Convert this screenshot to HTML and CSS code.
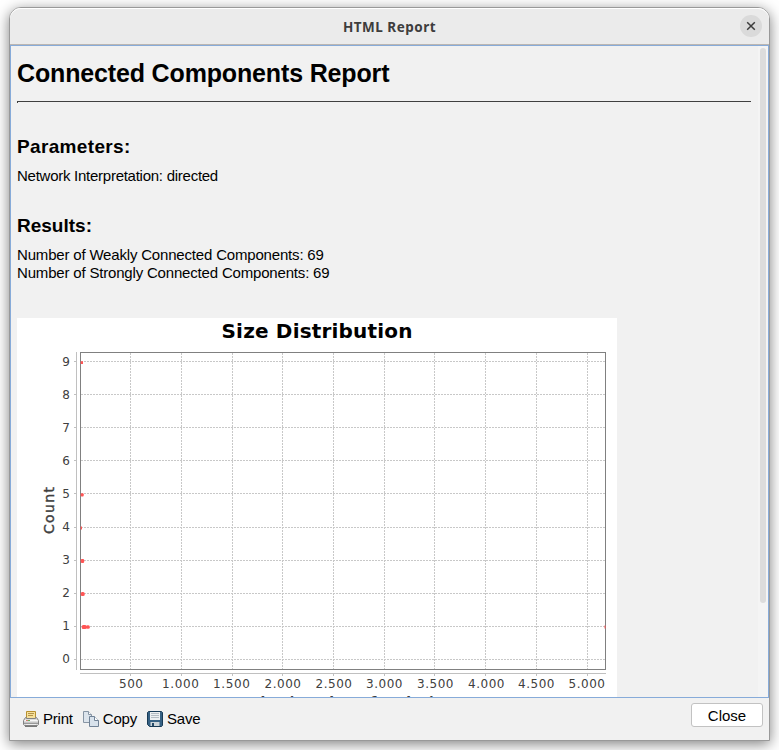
FILE: index.html
```
<!DOCTYPE html>
<html lang="en">
<head>
<meta charset="utf-8">
<title>HTML Report</title>
<link rel="stylesheet" href="styles.css">
</head>
<body>
<div class="window">
  <header class="titlebar">
    <h1 class="titlebar-text">HTML Report</h1>
    <button class="titlebar-close" aria-label="Close window">
      <svg width="10" height="10" viewBox="0 0 10 10"><path d="M1.2 1.2 8.8 8.8M8.800 1.200 1.200 8.800" fill="none" stroke="#3c3c3c" stroke-width="1.500"/></svg>
    </button>
  </header>
  <main class="viewport">
    <article class="report">
      <h1 class="report-title">Connected Components Report</h1>
      <hr class="rule">
      <h2 class="section parameters">Parameters:</h2>
      <p class="line interpretation">Network Interpretation: directed</p>
      <h2 class="section results">Results:</h2>
      <p class="line">Number of Weakly Connected Components: 69</p>
      <p class="line">Number of Strongly Connected Components: 69</p>
      <svg class="chart" width="600" height="400" viewBox="17 318 600 400">
        <rect x="17" y="318" width="600" height="400" fill="#fff"/>
        <text class="chart-title" x="221.500" y="338" textLength="191">Size Distribution</text>
        <g class="grid">
          <path d="M81 361.500H605M81 394.500H605M81 427.500H605M81 460.500H605M81 493.500H605M81 527.500H605M81 560.500H605M81 593.500H605M81 626.500H605M81 659.500H605"/>
          <path d="M130.500 353V669M181.500 353V669M232.500 353V669M282.500 353V669M333.500 353V669M384.500 353V669M434.500 353V669M485.500 353V669M536.500 353V669M587.500 353V669"/>
        </g>
        <path class="axis" d="M76.500 352V670M80 673.500H606M74 361.500h2M74 394.500h2M74 427.500h2M74 460.500h2M74 493.500h2M74 527.500h2M74 560.500h2M74 593.500h2M74 626.500h2M74 659.500h2M130.500 674v2M181.500 674v2M232.500 674v2M282.500 674v2M333.500 674v2M384.500 674v2M434.500 674v2M485.500 674v2M536.500 674v2M587.500 674v2"/>
        <rect class="frame" x="80.500" y="352.500" width="525" height="317"/>
        <g fill="#ff5555">
          <path d="M80.700 361.300h2.300v2.700h-2.300zM80.700 526.500h1.300v3h-1.300zM604.500 625.500h1v3h-1z"/>
          <rect x="80.700" y="493.200" width="3" height="3.300" rx="1"/>
          <rect x="80.700" y="559" width="3.500" height="4" rx="1.300"/>
          <rect x="80.700" y="592" width="4" height="4" rx="1.500"/>
          <rect x="81.700" y="625" width="5" height="4" rx="1.500"/>
          <rect x="86" y="625.300" width="3.800" height="3.400" rx="1.500"/>
        </g>
        <g class="tick" text-anchor="end">
          <text x="70" y="366">9</text><text x="70" y="399">8</text><text x="70" y="432">7</text><text x="70" y="465">6</text><text x="70" y="498">5</text><text x="70" y="531">4</text><text x="70" y="564">3</text><text x="70" y="597">2</text><text x="70" y="630">1</text><text x="70" y="663">0</text>
        </g>
        <g class="tick">
          <text x="119" y="688" textLength="24">500</text>
          <text x="162" y="688" textLength="37">1.000</text>
          <text x="213" y="688" textLength="37">1.500</text>
          <text x="264.500" y="688" textLength="36.500">2.000</text>
          <text x="315.500" y="688" textLength="36.500">2.500</text>
          <text x="366" y="688" textLength="36.500">3.000</text>
          <text x="417" y="688" textLength="36.500">3.500</text>
          <text x="468" y="688" textLength="36.500">4.000</text>
          <text x="518" y="688" textLength="36.500">4.500</text>
          <text x="568.500" y="688" textLength="36.500">5.000</text>
        </g>
        <text class="axis-label count" transform="translate(54 534) rotate(-90)" textLength="47">Count</text>
        <text class="axis-label" x="250.400" y="706.500" textLength="185">Size (number of nodes)</text>
      </svg>
    </article>
    <div class="scrollbar"><div class="thumb"></div></div>
  </main>
  <footer class="toolbar">
    <button class="tool print">
      <svg width="16" height="16" viewBox="0 0 16 16">
        <path d="M3.500 8V.500h9V8z" fill="#f6e09a" stroke="#b8902f"/>
        <path d="M5 2.500h6M5 4.500h5" stroke="#b3924a"/>
        <path d="M2.500 6.500h1v1h9v-1h1l2 3v4l-1 1h-13l-1-1v-4z" fill="#dcdcdc" stroke="#828282"/>
        <path d="M1.500 9.500h13" stroke="#f8f8f8"/>
        <path d="M1 11.500h14" stroke="#c4c4c4"/>
        <path d="M1 12.500h14" stroke="#999"/>
        <path d="M2 15.500h12" stroke="#777"/>
        <path d="M3 13.500h10" stroke="#eee"/>
        <path d="M3 9.500h2" stroke="#d77870"/><path d="M5 9.500h2" stroke="#68b45b"/>
      </svg>
      <span>Print</span>
    </button>
    <button class="tool copy">
      <svg width="16" height="16" viewBox="0 0 16 16">
        <path d="M.500.500h5l3 3v8h-8z" fill="#dce4ec" stroke="#8795a4"/>
        <path d="M5.500.500v3h3" fill="#fff" stroke="#8795a4"/>
        <path d="M6.500 5.500h5l4 4v6h-9z" fill="#d8e2ec" stroke="#718397"/>
        <path d="M11.500 5.500v4h4" fill="#fff" stroke="#718397"/>
      </svg>
      <span>Copy</span>
    </button>
    <button class="tool save">
      <svg width="16" height="16" viewBox="0 0 16 16">
        <path d="M1.500.500h13l1 1v13l-1 1h-12l-2-2v-12z" fill="#356083" stroke="#183a55"/>
        <path d="M3 1h10v8H3z" fill="#edf0f1"/>
        <path d="M4 2.500h8M4 4.500h8M4 6.500h8" stroke="#b5bdc3"/>
        <path d="M3.500 11h9v4h-9z" fill="#ccd5da"/>
        <path d="M5 12h2v3H5z" fill="#244966"/>
      </svg>
      <span>Save</span>
    </button>
    <button class="close-button">Close</button>
  </footer>
</div>
</body>
</html>
```
FILE: styles.css
```
* { box-sizing: border-box; }

body {
  margin: 0;
  height: 750px;
  padding: 7px 9px 9px;
  overflow: hidden;
  background: #fff;
  font-family: "Liberation Sans", sans-serif;
  color: #000;
}

button {
  border: 0;
  padding: 0;
  background: none;
  font: inherit;
  color: inherit;
}

.window {
  width: 761px;
  height: 734px;
  display: flex;
  flex-direction: column;
  border: 1px solid #999;
  border-radius: 12px 12px 0 0;
  background: #f1f1f1;
  box-shadow: 0 3px 14px rgba(0, 0, 0, .5);
}

.titlebar {
  height: 37px;
  flex: none;
  display: grid;
  grid-template-columns: 1fr auto 1fr;
  align-items: center;
  background: #ebebeb;
  border-radius: 11px 11px 0 0;
  border-bottom: 1px solid #bbb6b2;
  box-shadow: inset 0 1px #fff;
}

.titlebar-text {
  grid-column: 2;
  margin: 2px 0 0;
  font: 700 13.5px/20px "Noto Sans", sans-serif;
  letter-spacing: .5px;
  color: #3d3d3d;
}

.titlebar-close {
  justify-self: end;
  display: grid;
  place-items: center;
  width: 22px;
  height: 22px;
  margin-right: 7px;
  border-radius: 50%;
  background: #dadada;
}

.viewport {
  height: 653px;
  flex: none;
  display: flex;
  overflow: hidden;
  border: 1px solid #87abd9;
}

.report {
  flex: 1;
  padding: 0 7px 0 6px;
}

.report-title {
  margin: 11px 0 0;
  font-size: 25px;
  line-height: 32px;
  letter-spacing: -.15px;
  white-space: nowrap;
}

.rule {
  height: 2px;
  margin: 12px 0 0;
  border: 0;
  border-top: 1px solid #404040;
  border-left: 1px solid #404040;
}

.section {
  margin: 32px 0 0;
  font-size: 19px;
  line-height: 24px;
}

.parameters { letter-spacing: .35px; }
.results { margin-top: 29px; }

.line {
  margin: 0;
  font-size: 15px;
  line-height: 18px;
  letter-spacing: -.18px;
}

.interpretation { letter-spacing: -.26px; }
.section + .line { margin-top: 8px; }

.chart {
  display: block;
  margin-top: 36px;
  font-family: "DejaVu Sans", sans-serif;
}

.chart-title { font-size: 20px; font-weight: 700; }
.grid { fill: none; stroke: #c8c8c8; stroke-dasharray: 2 1; }
.axis { fill: none; stroke: #c0c0c0; }
.frame { fill: none; stroke: #808080; }
.tick { font-size: 12px; fill: #404040; }
.axis-label { font-size: 14px; font-weight: 700; fill: #404040; }
.count { font-weight: 400; stroke: #404040; stroke-width: .4px; }

.scrollbar {
  width: 10px;
  padding: 2px 2px 0;
  background: #f4f4f4;
}

.thumb {
  width: 6px;
  height: 555px;
  border-radius: 3px;
  background: #dcdcdc;
}

.toolbar {
  flex: 1;
  display: flex;
  align-items: flex-start;
  padding: 5px 6px 0 13px;
  font-size: 15px;
}

.tool {
  display: flex;
  align-items: center;
  gap: 4px;
  height: 18px;
  margin-top: 7px;
  letter-spacing: -.2px;
}

.tool span { margin-top: -2px; }
.copy { margin-left: 10px; }
.save { margin-left: 10px; }

.close-button {
  width: 72px;
  height: 24px;
  margin-left: auto;
  border: 1px solid #c2c2c2;
  border-radius: 3px;
  background: #fff;
}
```
